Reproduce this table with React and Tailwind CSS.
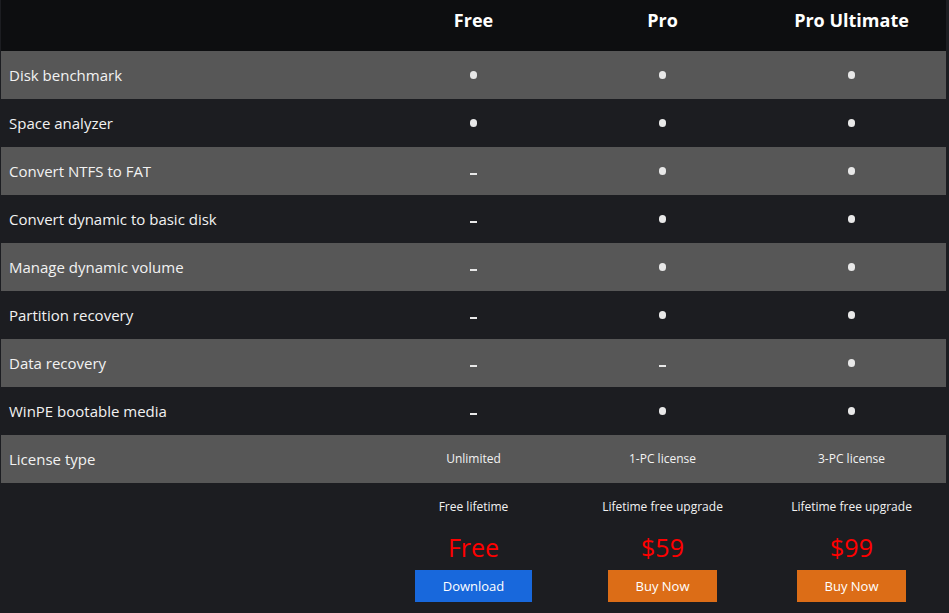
import React from "react";

const features = [
  ["Disk benchmark", [1, 1, 1]],
  ["Space analyzer", [1, 1, 1]],
  ["Convert NTFS to FAT", [0, 1, 1]],
  ["Convert dynamic to basic disk", [0, 1, 1]],
  ["Manage dynamic volume", [0, 1, 1]],
  ["Partition recovery", [0, 1, 1]],
  ["Data recovery", [0, 0, 1]],
  ["WinPE bootable media", [0, 1, 1]],
];

const plans = [
  { sub: "Free lifetime", price: "Free", btn: "Download", cls: "bg-[#1868dc] w-[117px]" },
  { sub: "Lifetime free upgrade", price: "$59", btn: "Buy Now", cls: "bg-[#dc6d17] w-[109px]" },
  { sub: "Lifetime free upgrade", price: "$99", btn: "Buy Now", cls: "bg-[#dc6d17] w-[109px]" },
];

const Mark = ({ on }) =>
  on ? (
    <div className="w-[7px] h-[8px] rounded-full bg-[#e8e8e8]" />
  ) : (
    <div className="w-[7px] h-[2px] mt-[6px] bg-[#e8e8e8]" />
  );

const App = () => {
  return (
    <div className="min-h-[613px] bg-[#1c1d21] font-['Open_Sans',sans-serif] text-[#f2f2f2]">
      <div className="ml-px w-[945px]">
        {/* header */}
        <div className="grid grid-cols-[378px_189px_189px_189px] h-[51px] bg-[#0d0e10] text-white font-bold text-[18px] leading-6">
          <div />
          <div className="text-center pt-2">Free</div>
          <div className="text-center pt-2">Pro</div>
          <div className="text-center pt-2">Pro Ultimate</div>
        </div>

        {features.map(([name, marks], i) => (
          <div
            key={name}
            className={
              "grid grid-cols-[378px_189px_189px_189px] h-[48px] items-center " +
              (i % 2 === 0 ? "bg-[#575757]" : "")
            }
          >
            <div className="pl-2 text-[15px]">{name}</div>
            {marks.map((m, j) => (
              <div key={j} className="flex justify-center">
                <Mark on={m} />
              </div>
            ))}
          </div>
        ))}

        <div className="grid grid-cols-[378px_189px_189px_189px] h-[48px] items-center bg-[#575757]">
          <div className="pl-2 text-[15px]">License type</div>
          <div className="text-center text-[12px]">Unlimited</div>
          <div className="text-center text-[12px]">1-PC license</div>
          <div className="text-center text-[12px]">3-PC license</div>
        </div>

        <div className="grid grid-cols-[378px_189px_189px_189px]">
          <div />
          {plans.map((p, i) => (
            <div key={i} className="flex flex-col items-center pt-[15px]">
              <div className="text-[12px] leading-[18px]">{p.sub}</div>
              <div className="mt-[16px] text-[25px] leading-[30px] text-[#ff0000]">{p.price}</div>
              <button className={"mt-[8px] h-[32px] pt-[2px] text-[13px] text-white " + p.cls}>{p.btn}</button>
            </div>
          ))}
        </div>
      </div>
    </div>
  );
};

export default App;
